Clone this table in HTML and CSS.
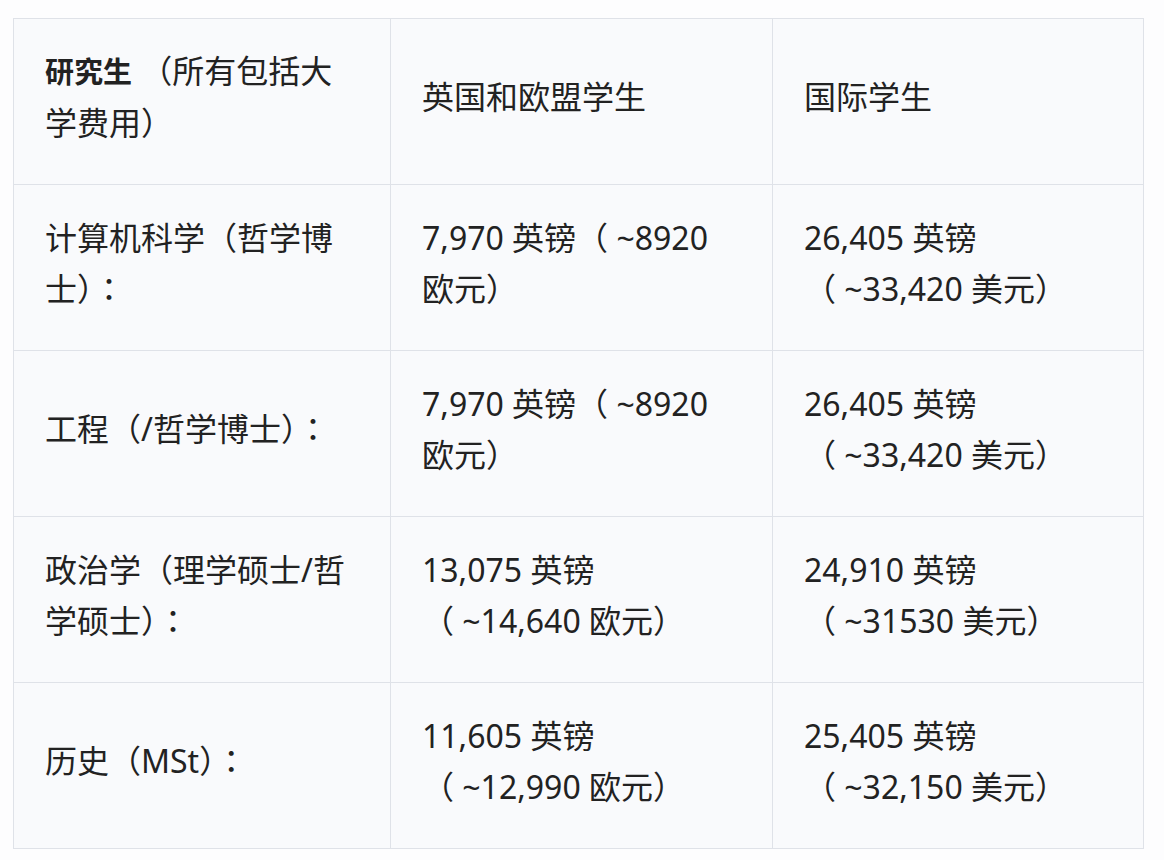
FILE: index.html
```html
<!DOCTYPE html>
<html lang="zh">
<head>
<meta charset="utf-8">
<link rel="stylesheet" href="styles.css">
</head>
<body>
<table class="fees">
  <colgroup>
    <col class="c1"><col class="c2"><col class="c3">
  </colgroup>
  <tr>
    <td><b>研究生</b> （所有包括大学费用）</td>
    <td>英国和欧盟学生</td>
    <td>国际学生</td>
  </tr>
  <tr>
    <td>计算机科学（哲学博士）：</td>
    <td>7,970 英镑（ ~8920 欧元）</td>
    <td>26,405 英镑<br>（ ~33,420 美元）</td>
  </tr>
  <tr>
    <td>工程（/哲学博士）：</td>
    <td>7,970 英镑（ ~8920 欧元）</td>
    <td>26,405 英镑<br>（ ~33,420 美元）</td>
  </tr>
  <tr>
    <td>政治学（理学硕士/哲学硕士）：</td>
    <td>13,075 英镑<br>（ ~14,640 欧元）</td>
    <td>24,910 英镑<br>（ ~31530 美元）</td>
  </tr>
  <tr>
    <td>历史（MSt）：</td>
    <td>11,605 英镑<br>（ ~12,990 欧元）</td>
    <td>25,405 英镑<br>（ ~32,150 美元）</td>
  </tr>
</table>
</body>
</html>
```

FILE: styles.css
```css
html, body {
  margin: 0;
  padding: 0;
  background: #fdfdfe;
}
body {
  padding: 18px 0 0 13px;
  font-family: "Noto Sans", "Noto Sans CJK TC", sans-serif;
  color: #222222;
}
.fees {
  border-collapse: collapse;
  width: 1130px;
  table-layout: fixed;
  background: #f9fafc;
  font-size: 32px;
  line-height: 51px;
  -webkit-locale: "zh-TW";
}
.c1 { width: 377px; }
.c2 { width: 382px; }
.c3 { width: 371px; }
.fees td {
  border: 1px solid #dfe2e8;
  height: 155px;
  padding: 0 28px 10px 31px;
  vertical-align: middle;
  font-weight: 400;
}
.fees b {
  font-size: 29px;
  font-weight: 700;
}
```
